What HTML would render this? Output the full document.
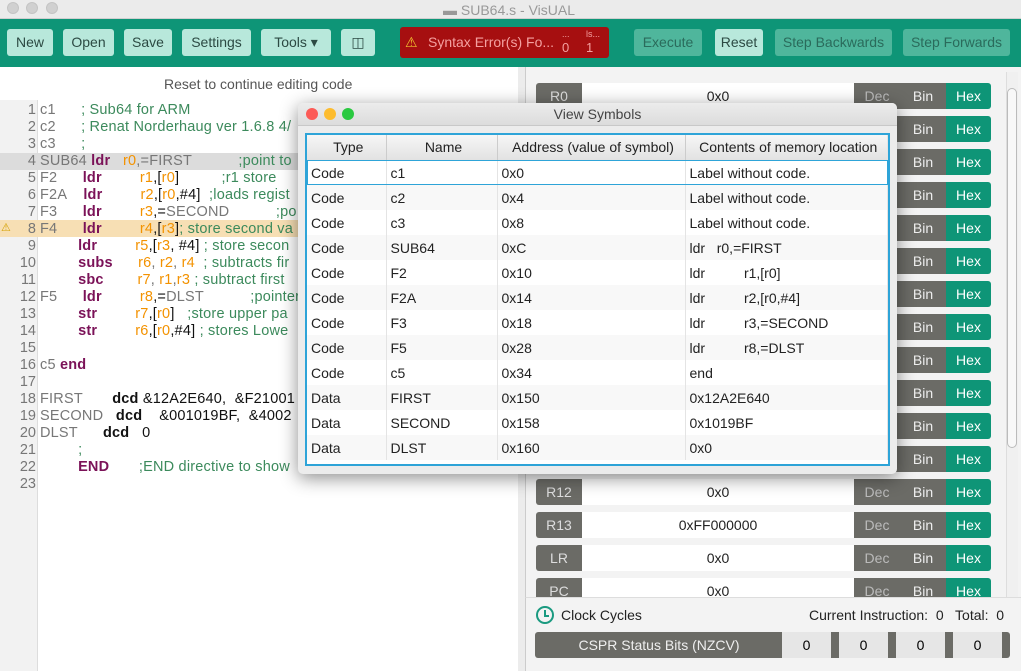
<!DOCTYPE html>
<html><head><meta charset="utf-8"><style>
*{box-sizing:border-box;margin:0;padding:0}
body{width:1021px;height:671px;overflow:hidden;background:#ececec;font-family:"Liberation Sans",sans-serif;position:relative;font-size:14px}
.abs{position:absolute}
.title{left:0;top:0;width:1021px;height:19px;background:#ebebeb;border-bottom:1px solid #d0d0d0}
.dot{width:12px;height:12px;border-radius:50%;background:#d0d0d0;top:2px;border:1px solid #c4c4c4}
.tb{left:0;top:19px;width:1021px;height:48px;background:#0e9577}
.btn{top:29px;height:27px;background:#b8e8db;border-radius:3px;color:#2c4a43;font-size:14px;text-align:center;line-height:27px}
.dis{background:#4fb69c;color:#2a6b5b}
.left{left:0;top:67px;width:518px;height:604px;background:#fff}
.gut{left:0;top:100px;width:38px;height:571px;background:#f2f2f2;border-right:1px solid #ddd}
.ln{position:absolute;left:0;width:36px;text-align:right;color:#777;font-size:14.5px}
.code{position:absolute;left:40px;font-size:14.5px;color:#777;white-space:pre;letter-spacing:0.2px}
.k{color:#7b1258;font-weight:bold}.r{color:#f39200}.c{color:#3c8a5c}.b{color:#111}.kb{color:#111;font-weight:bold}
.right{left:525px;top:67px;width:496px;height:530px;background:#f3f3f3;border-left:1px solid #ccc}
.reg{position:absolute;left:536px;width:455px;height:26px;border-radius:3px;overflow:hidden;font-size:14px}
.reg div{position:absolute;top:0;height:26px;line-height:26px;text-align:center}
.dlg{left:298px;top:103px;width:599px;height:371px;background:#ececec;border-radius:5px;box-shadow:0 4px 18px rgba(0,0,0,.45)}
table{border-collapse:collapse;font-size:14px;color:#222}
td,th{height:25px;border-right:1px solid #e4e4e4;padding-left:4px;text-align:left;font-weight:normal}
</style></head><body>
<div class="abs title"></div>
<div class="abs dot" style="left:7px"></div><div class="abs dot" style="left:26px"></div><div class="abs dot" style="left:46px"></div>
<div class="abs" style="left:443px;top:2px;font-size:14px;color:#999">▬ SUB64.s - VisUAL</div>
<div class="abs tb"></div>
<div class="abs btn" style="left:7px;width:46px">New</div>
<div class="abs btn" style="left:63px;width:51px">Open</div>
<div class="abs btn" style="left:124px;width:48px">Save</div>
<div class="abs btn" style="left:182px;width:69px">Settings</div>
<div class="abs btn" style="left:261px;width:70px">Tools ▾</div>
<div class="abs btn" style="left:341px;width:34px">◫</div>
<div class="abs" style="left:400px;top:27px;width:209px;height:31px;background:#a60f10;border-radius:3px;color:#f4a0a0;font-size:14px;line-height:31px;padding-left:28px">Syntax Error(s) Fo...<span style="position:absolute;left:162px;top:0;line-height:14px;font-size:9px">...<br><span style="font-size:13px">0</span></span><span style="position:absolute;left:186px;top:0;line-height:14px;font-size:9px">ls...<br><span style="font-size:13px">1</span></span><span style="position:absolute;left:5px;top:0;color:#f2c230">⚠</span></div>
<div class="abs btn dis" style="left:634px;width:68px">Execute</div>
<div class="abs btn" style="left:715px;width:48px">Reset</div>
<div class="abs btn dis" style="left:775px;width:117px">Step Backwards</div>
<div class="abs btn dis" style="left:903px;width:107px">Step Forwards</div>
<div class="abs left"></div>
<div class="abs" style="left:164px;top:76px;color:#555;font-size:14px">Reset to continue editing code</div>
<div class="abs gut"></div>
<div class="abs" style="left:0;top:153px;width:518px;height:17px;background:#dcdcdc"></div>
<div class="abs" style="left:0;top:220px;width:518px;height:17px;background:#f7dfb4"></div>
<div class="abs" style="left:1px;top:221px;color:#d4a000;font-size:11px">⚠</div>
<div class="abs" style="left:0;top:102px;width:300px;height:400px">
<div class="ln" style="top:0">1</div><div class="code" style="top:0">c1      <span class="c">; Sub64 for ARM</span></div>
<div class="ln" style="top:17px">2</div><div class="code" style="top:17px">c2      <span class="c">; Renat Norderhaug ver 1.6.8 4/</span></div>
<div class="ln" style="top:34px">3</div><div class="code" style="top:34px">c3      <span class="c">;</span></div>
<div class="ln" style="top:51px">4</div><div class="code" style="top:51px">SUB64 <span class="k">ldr</span>   <span class="r">r0</span>,=FIRST           <span class="c">;point to</span></div>
<div class="ln" style="top:68px">5</div><div class="code" style="top:68px">F2      <span class="k">ldr</span>         <span class="r">r1</span><span class="b">,[</span><span class="r">r0</span><span class="b">]</span>          <span class="c">;r1 store</span></div>
<div class="ln" style="top:85px">6</div><div class="code" style="top:85px">F2A    <span class="k">ldr</span>         <span class="r">r2</span><span class="b">,[</span><span class="r">r0</span><span class="b">,#4]</span>  <span class="c">;loads regist</span></div>
<div class="ln" style="top:102px">7</div><div class="code" style="top:102px">F3      <span class="k">ldr</span>         <span class="r">r3</span><span class="b">,=</span>SECOND           <span class="c">;po</span></div>
<div class="ln" style="top:119px">8</div><div class="code" style="top:119px">F4      <span class="k">ldr</span>         <span class="r">r4</span><span class="b">,[</span><span class="r">r3</span><span class="b">]</span><span class="c">; store second va</span></div>
<div class="ln" style="top:136px">9</div><div class="code" style="top:136px">         <span class="k">ldr</span>         <span class="r">r5</span><span class="b">,[</span><span class="r">r3</span><span class="b">, #4]</span> <span class="c">; store secon</span></div>
<div class="ln" style="top:153px">10</div><div class="code" style="top:153px">         <span class="k">subs</span>      <span class="r">r6</span>, <span class="r">r2</span>, <span class="r">r4</span>  <span class="c">; subtracts fir</span></div>
<div class="ln" style="top:170px">11</div><div class="code" style="top:170px">         <span class="k">sbc</span>        <span class="r">r7</span>, <span class="r">r1</span>,<span class="r">r3</span> <span class="c">; subtract first</span></div>
<div class="ln" style="top:187px">12</div><div class="code" style="top:187px">F5      <span class="k">ldr</span>         <span class="r">r8</span><span class="b">,=</span>DLST           <span class="c">;pointer</span></div>
<div class="ln" style="top:204px">13</div><div class="code" style="top:204px">         <span class="k">str</span>         <span class="r">r7</span><span class="b">,[</span><span class="r">r0</span><span class="b">]</span>   <span class="c">;store upper pa</span></div>
<div class="ln" style="top:221px">14</div><div class="code" style="top:221px">         <span class="k">str</span>         <span class="r">r6</span><span class="b">,[</span><span class="r">r0</span><span class="b">,#4]</span> <span class="c">; stores Lowe</span></div>
<div class="ln" style="top:238px">15</div>
<div class="ln" style="top:255px">16</div><div class="code" style="top:255px">c5 <span class="k">end</span></div>
<div class="ln" style="top:272px">17</div>
<div class="ln" style="top:289px">18</div><div class="code" style="top:289px">FIRST       <span class="kb">dcd</span> <span class="b">&amp;12A2E640,  &amp;F21001</span></div>
<div class="ln" style="top:306px">19</div><div class="code" style="top:306px">SECOND   <span class="kb">dcd</span>    <span class="b">&amp;001019BF,  &amp;4002</span></div>
<div class="ln" style="top:323px">20</div><div class="code" style="top:323px">DLST      <span class="kb">dcd</span>   <span class="b">0</span></div>
<div class="ln" style="top:340px">21</div><div class="code" style="top:340px">         <span class="c">;</span></div>
<div class="ln" style="top:357px">22</div><div class="code" style="top:357px">         <span class="k">END</span>       <span class="c">;END directive to show</span></div>
<div class="ln" style="top:374px">23</div>
</div>
<div class="abs right"></div>
<div class="abs" style="left:1006px;top:72px;width:12px;height:530px;background:#f0f0f0;border-left:1px solid #ddd"></div>
<div class="abs" style="left:1007px;top:88px;width:10px;height:360px;border:1px solid #bbb;border-radius:5px;background:#f8f8f8"></div>
<div id="regs"></div>
<script>
var names=["R0","R1","R2","R3","R4","R5","R6","R7","R8","R9","R10","R11","R12","R13","LR","PC"];
var h="";
for(var i=0;i<16;i++){var t=83+33*i;var v=i==13?"0xFF000000":"0x0";
h+='<div class="reg" style="top:'+t+'px"><div style="left:0;width:46px;background:#6b6b66;color:#ddd">'+names[i]+'</div><div style="left:46px;width:272px;background:#fff;color:#222">'+v+'</div><div style="left:318px;width:46px;background:#6b6b66;color:#bbb">Dec</div><div style="left:364px;width:46px;background:#6b6b66;color:#eee">Bin</div><div style="left:410px;width:45px;background:#0e9577;color:#fff">Hex</div></div>';}
document.getElementById("regs").innerHTML=h;
</script>
<div class="abs" style="left:525px;top:597px;width:496px;height:74px;background:#f3f3f3;border-top:1px solid #ddd;border-left:1px solid #ccc"></div>
<div class="abs" style="left:536px;top:606px;width:18px;height:18px;border:2px solid #1a9a80;border-radius:50%"></div>
<div class="abs" style="left:544px;top:610px;width:2px;height:6px;background:#1a9a80"></div>
<div class="abs" style="left:544px;top:615px;width:5px;height:2px;background:#1a9a80"></div>
<div class="abs" style="left:561px;top:607px;color:#222">Clock Cycles</div>
<div class="abs" style="left:809px;top:607px;color:#222">Current Instruction:&nbsp; 0&nbsp;&nbsp; Total:&nbsp; 0</div>
<div class="abs" style="left:535px;top:632px;width:475px;height:26px;background:#6b6b66;border-radius:3px"></div>
<div class="abs" style="left:535px;top:637px;width:248px;text-align:center;color:#eee">CSPR Status Bits (NZCV)</div>
<div class="abs" style="left:782px;top:632px;width:49px;height:26px;background:#e6e6e6;text-align:center;line-height:26px">0</div>
<div class="abs" style="left:839px;top:632px;width:49px;height:26px;background:#e6e6e6;text-align:center;line-height:26px">0</div>
<div class="abs" style="left:896px;top:632px;width:49px;height:26px;background:#e6e6e6;text-align:center;line-height:26px">0</div>
<div class="abs" style="left:953px;top:632px;width:49px;height:26px;background:#e6e6e6;text-align:center;line-height:26px">0</div>
<div class="abs dlg">
<div style="height:23px;border-bottom:1px solid #c8c8c8;background:linear-gradient(#ececec,#dcdcdc);border-radius:5px 5px 0 0;text-align:center;line-height:23px;color:#444;font-size:14px">View Symbols</div>
<div class="abs" style="left:8px;top:5px;width:12px;height:12px;border-radius:50%;background:#fc5b57"></div>
<div class="abs" style="left:26px;top:5px;width:12px;height:12px;border-radius:50%;background:#fdbc2e"></div>
<div class="abs" style="left:44px;top:5px;width:12px;height:12px;border-radius:50%;background:#2ac940"></div>
<div class="abs" style="left:7px;top:30px;width:585px;height:333px;border:2px solid #2ea4d8;background:#fff;overflow:hidden">
<table style="width:581px">
<tr style="background:linear-gradient(#f6f6f6,#e2e2e2)"><th style="width:79px;text-align:center;height:24px;border-bottom:1px solid #ccc;border-right:1px solid #ccc">Type</th><th style="width:111px;text-align:center;border-bottom:1px solid #ccc;border-right:1px solid #ccc">Name</th><th style="width:188px;text-align:center;border-bottom:1px solid #ccc;border-right:1px solid #ccc">Address (value of symbol)</th><th style="text-align:center;border-bottom:1px solid #ccc">Contents of memory location</th></tr>
<tr style="outline:1px solid #2ea4d8;outline-offset:-1px"><td>Code</td><td>c1</td><td>0x0</td><td>Label without code.</td></tr>
<tr style="background:#f8f8f8"><td>Code</td><td>c2</td><td>0x4</td><td>Label without code.</td></tr>
<tr><td>Code</td><td>c3</td><td>0x8</td><td>Label without code.</td></tr>
<tr style="background:#f8f8f8"><td>Code</td><td>SUB64</td><td>0xC</td><td>ldr&nbsp;&nbsp; r0,=FIRST</td></tr>
<tr><td>Code</td><td>F2</td><td>0x10</td><td>ldr&nbsp;&nbsp;&nbsp;&nbsp;&nbsp;&nbsp;&nbsp;&nbsp;&nbsp; r1,[r0]</td></tr>
<tr style="background:#f8f8f8"><td>Code</td><td>F2A</td><td>0x14</td><td>ldr&nbsp;&nbsp;&nbsp;&nbsp;&nbsp;&nbsp;&nbsp;&nbsp;&nbsp; r2,[r0,#4]</td></tr>
<tr><td>Code</td><td>F3</td><td>0x18</td><td>ldr&nbsp;&nbsp;&nbsp;&nbsp;&nbsp;&nbsp;&nbsp;&nbsp;&nbsp; r3,=SECOND</td></tr>
<tr style="background:#f8f8f8"><td>Code</td><td>F5</td><td>0x28</td><td>ldr&nbsp;&nbsp;&nbsp;&nbsp;&nbsp;&nbsp;&nbsp;&nbsp;&nbsp; r8,=DLST</td></tr>
<tr><td>Code</td><td>c5</td><td>0x34</td><td>end</td></tr>
<tr style="background:#f8f8f8"><td>Data</td><td>FIRST</td><td>0x150</td><td>0x12A2E640</td></tr>
<tr><td>Data</td><td>SECOND</td><td>0x158</td><td>0x1019BF</td></tr>
<tr style="background:#f8f8f8"><td>Data</td><td>DLST</td><td>0x160</td><td>0x0</td></tr>
</table></div>
</div>
</body></html>
